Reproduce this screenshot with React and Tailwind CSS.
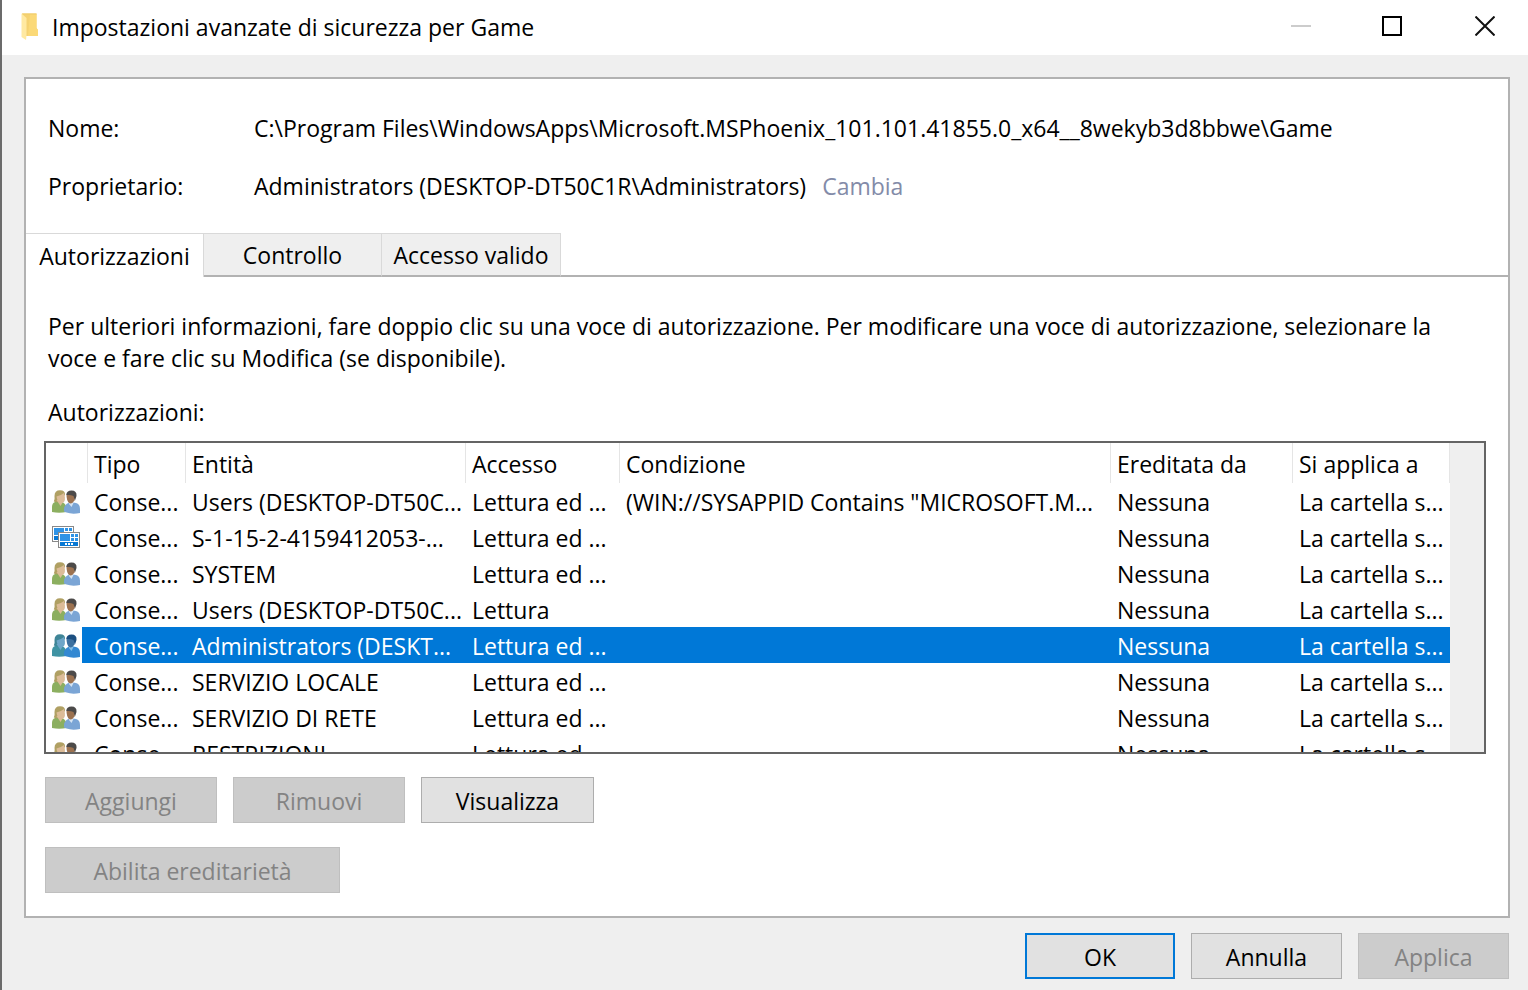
import React, { useState } from "react";

const entries = [
  { icon: "users", type: "Conse...", entity: "Users (DESKTOP-DT50C...", access: "Lettura ed ...", condition: '(WIN://SYSAPPID Contains "MICROSOFT.M...' },
  { icon: "package", type: "Conse...", entity: "S-1-15-2-4159412053-...", access: "Lettura ed ...", condition: "" },
  { icon: "users", type: "Conse...", entity: "SYSTEM", access: "Lettura ed ...", condition: "" },
  { icon: "users", type: "Conse...", entity: "Users (DESKTOP-DT50C...", access: "Lettura", condition: "" },
  { icon: "users", type: "Conse...", entity: "Administrators (DESKT...", access: "Lettura ed ...", condition: "" },
  { icon: "users", type: "Conse...", entity: "SERVIZIO LOCALE", access: "Lettura ed ...", condition: "" },
  { icon: "users", type: "Conse...", entity: "SERVIZIO DI RETE", access: "Lettura ed ...", condition: "" },
  { icon: "users", type: "Conse...", entity: "RESTRIZIONI", access: "Lettura ed ...", condition: "" },
];

const tabs = ["Autorizzazioni", "Controllo", "Accesso valido"];

const columns = [
  { label: "", width: "w-[42px]" },
  { label: "Tipo", width: "w-[98px]" },
  { label: "Entità", width: "w-[280px]" },
  { label: "Accesso", width: "w-[154px]" },
  { label: "Condizione", width: "" },
  { label: "Ereditata da", width: "w-[182px]" },
  { label: "Si applica a", width: "w-[157px]" },
];

const FolderIcon = () => (
  <svg width="18" height="28" viewBox="0 0 18 28" aria-hidden="true">
    <path d="M2 0.500H16.500V15L18 17V23H5V6L2 2Z" fill="#f5d272" />
    <path d="M10 1H16.500V15L18 17V23H8Z" fill="#fbd977" />
    <path d="M1.500 0.500L6.500 5V22.500L6 27L1.500 24Z" fill="#ffe9a2" />
    <path d="M2 0.500H16.500V1.500H3Z" fill="#efcb6b" />
  </svg>
);

const UsersIcon = ({ selected }) => {
  const c = selected
    ? { hair: "#3f8597", face: "#6da5c8", top: "#3f93a3", hair2: "#1c4f80", face2: "#3c709f", top2: "#3388d2", neck: "#83bde5" }
    : { hair: "#b0a063", face: "#dcbc98", top: "#8caf60", hair2: "#4c4a49", face2: "#9c7250", top2: "#7ba5d5", neck: "#d5e4f3" };
  return (
    <svg width="28" height="24" viewBox="0 0 28 24" aria-hidden="true">
      <path d="M0 22V17Q0 13 3 12L7 11L11 12.500Q14 14 14.500 18V22Q7 23.500 0 22Z" fill={c.top} />
      <path d="M1.800 11.500Q3 9 2.500 6Q2.500 0.200 8 0.200Q13.500 0.200 13 5L10 8L5 12.500Z" fill={c.hair} />
      <path d="M4.500 10L8.500 16L11.500 11V9Z" fill={c.face} />
      <path d="M4.500 6.500Q9 5.500 12 3Q14.500 11.500 10.500 13Q5 12.500 4.500 6.500Z" fill={c.face} />
      <path d="M12 21.500Q11.500 16.500 14.500 14L18 12L24 13Q28 14 28 19V23Q20 24.500 14.500 22.500Z" fill={c.top2} />
      <path d="M16.500 11.500L17 14L19.500 17L22 12Z" fill={c.neck} />
      <path d="M14.500 4.500H23.500L22.500 10.500Q20 14.500 17 13Q14.500 10.500 14.500 4.500Z" fill={c.face2} />
      <path d="M14.300 5Q14.500 0.500 19.500 0.500Q25 0.500 24.500 6L23 10.500L21.500 6Q18.500 4.500 14.300 5Z" fill={c.hair2} />
    </svg>
  );
};

const Tile = ({ x, y }) => (
  <g transform={`translate(${x} ${y})`}>
    <rect x="0.500" y="0.500" width="21" height="15" fill="#fff" stroke="#888" />
    <rect x="2" y="2" width="10" height="7" fill="#2e93e6" />
    <rect x="13" y="2" width="3" height="3" fill="#2e93e6" />
    <rect x="17" y="2" width="3" height="3" fill="#2e93e6" />
    <rect x="13" y="6" width="3" height="3" fill="#2e93e6" />
    <rect x="17" y="6" width="3" height="3" fill="#2e93e6" />
    <rect x="2" y="10" width="18" height="4" fill="#0878d4" />
    <path d="M7 11h2v2H7zM10 11h2v2h-2zM13 11h2v2h-2z" fill="#fff" />
  </g>
);

const PackageIcon = () => (
  <svg width="28" height="24" viewBox="0 0 28 24" aria-hidden="true">
    <Tile x={0} y={0} />
    <Tile x={6} y={6} />
  </svg>
);

const DialogButton = ({ children, className = "", primary = false, disabled = false }) => (
  <button
    type="button"
    disabled={disabled}
    className={`h-[46px] pt-0.5 ${
      disabled
        ? "border border-[#bfbfbf] bg-[#cccccc] text-[#838383]"
        : primary
          ? "border-2 border-[#0078d7] bg-[#e1e1e1]"
          : "border border-[#adadad] bg-[#e1e1e1]"
    } ${className}`}
  >
    {children}
  </button>
);

const App = () => {
  const [activeTab, setActiveTab] = useState(0);
  const [selectedRow, setSelectedRow] = useState(4);

  return (
    <div className="flex min-h-screen flex-col border-l-2 border-[#6b6b6b] bg-[#efefef] font-['Open_Sans','Noto_Sans',sans-serif] text-[23px] leading-8 text-black">
      <header className="flex h-[55px] items-center bg-white pb-0.5 pl-[18px]">
        <FolderIcon />
        <h1 className="ml-3.5 flex-1">Impostazioni avanzate di sicurezza per Game</h1>
        <button type="button" disabled aria-label="Riduci a icona" className="flex h-full w-[82px] items-center justify-center pb-0.5">
          <svg width="20" height="20" viewBox="0 0 20 20"><path d="M0 9h20v2H0z" fill="#ccc" /></svg>
        </button>
        <button type="button" aria-label="Ingrandisci" className="flex h-full w-[100px] items-center justify-center pb-0.5">
          <svg width="20" height="20" viewBox="0 0 20 20" fill="none" stroke="#000" strokeWidth="2"><rect x="1" y="1" width="18" height="18" /></svg>
        </button>
        <button type="button" aria-label="Chiudi" className="flex h-full w-[86px] items-center justify-center pb-0.5">
          <svg width="20" height="20" viewBox="0 0 20 20" fill="none" stroke="#111" strokeWidth="2"><path d="M0.500 0.500L19.500 19.500M19.500 0.500L0.500 19.500" /></svg>
        </button>
      </header>

      <main className="mt-[22px] mr-[18px] ml-[22px] flex-1 border-2 border-[#b2b2b2] bg-white">
        <dl className="grid grid-cols-[206px_1fr] gap-y-[26px] px-[22px] pt-[33px]">
          <dt>Nome:</dt>
          <dd>C:\Program Files\WindowsApps\Microsoft.MSPhoenix_101.101.41855.0_x64__8wekyb3d8bbwe\Game</dd>
          <dt>Proprietario:</dt>
          <dd>
            Administrators (DESKTOP-DT50C1R\Administrators)
            <a href="#cambia" className="ml-4 text-[#838ba8]">Cambia</a>
          </dd>
        </dl>

        <div className="mt-[31px] flex h-11" role="tablist">
          {tabs.map((tab, i) => (
            <button
              key={tab}
              type="button"
              role="tab"
              aria-selected={activeTab === i}
              onClick={() => setActiveTab(i)}
              className={`border-t border-r border-t-[#d9d9d9] border-r-[#d9d9d9] ${i === 2 ? "w-[179px]" : "w-[178px]"} ${
                activeTab === i ? "bg-white" : "border-b-2 border-b-[#b2b2b2] bg-[#efefef]"
              }`}
            >
              {tab}
            </button>
          ))}
          <div className="flex-1 border-b-2 border-[#b2b2b2]"></div>
        </div>

        <section className="px-[18px] pt-[33px] pb-[22px]">
          <p className="px-1">
            Per ulteriori informazioni, fare doppio clic su una voce di autorizzazione. Per modificare una voce di autorizzazione, selezionare la voce e fare clic su Modifica (se disponibile).
          </p>
          <h2 className="mt-[22px] px-1">Autorizzazioni:</h2>

          <div className="mt-[13px] mr-1 flex h-[313px] overflow-hidden border-2 border-[#646464]">
            <table className="w-full flex-1 table-fixed border-collapse self-start text-left whitespace-nowrap">
              <thead>
                <tr className="h-10">
                  {columns.map((col) => (
                    <th key={col.label} scope="col" className={`p-0 font-normal ${col.width}`}>
                      <div className="h-10 border-r border-[#e5e5e5] pt-[5px] pl-1.5">{col.label}</div>
                    </th>
                  ))}
                </tr>
              </thead>
              <tbody>
                {entries.map((entry, i) => {
                  const selected = selectedRow === i;
                  return (
                    <tr key={i} onClick={() => setSelectedRow(i)} className={`h-9 ${selected ? "bg-[#0078d7] text-white" : ""}`}>
                      <td className="p-0">
                        <div className="flex h-9 w-9 bg-white pt-[7px] pl-1.5">
                          {entry.icon === "users" ? <UsersIcon selected={selected} /> : <PackageIcon />}
                        </div>
                      </td>
                      <td className="p-0 pb-px pt-0.5 pl-1.5">{entry.type}</td>
                      <td className="p-0 pb-px pt-0.5 pl-1.5">{entry.entity}</td>
                      <td className="p-0 pb-px pt-0.5 pl-1.5">{entry.access}</td>
                      <td className="p-0 pb-px pt-0.5 pl-1.5">{entry.condition}</td>
                      <td className="p-0 pb-px pt-0.5 pl-1.5">Nessuna</td>
                      <td className="p-0 pb-px pt-0.5 pl-1.5">La cartella s...</td>
                    </tr>
                  );
                })}
              </tbody>
            </table>
            <div className="w-[34px] shrink-0 bg-[#efefef]"></div>
          </div>

          <div className="mt-[23px] flex gap-4 pl-px">
            <DialogButton disabled className="w-[172px]">Aggiungi</DialogButton>
            <DialogButton disabled className="w-[172px]">Rimuovi</DialogButton>
            <DialogButton className="w-[173px]">Visualizza</DialogButton>
          </div>
          <div className="mt-6 flex pl-px">
            <DialogButton disabled className="w-[295px]">Abilita ereditarietà</DialogButton>
          </div>
        </section>
      </main>

      <footer className="flex justify-end gap-4 pt-[15px] pr-[19px] pb-[11px]">
        <DialogButton primary className="w-[150px]">OK</DialogButton>
        <DialogButton className="w-[151px]">Annulla</DialogButton>
        <DialogButton disabled className="w-[151px]">Applica</DialogButton>
      </footer>
    </div>
  );
};

export default App;
